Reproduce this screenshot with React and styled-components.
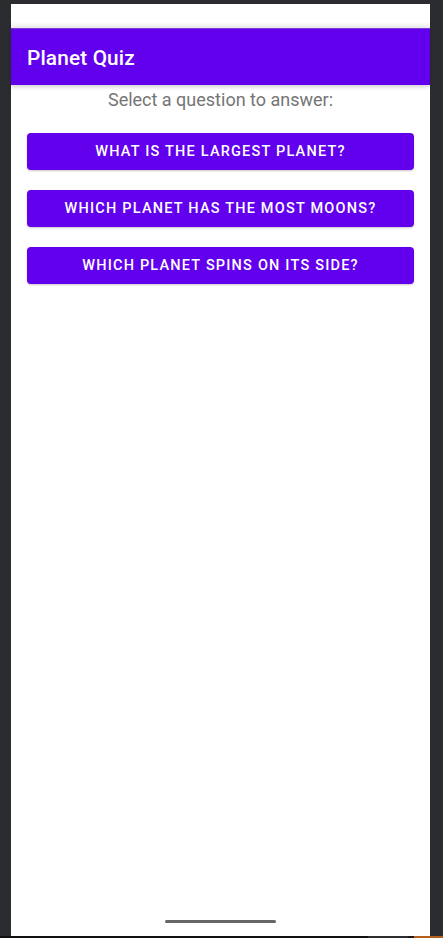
import React from "react";
import styled, { createGlobalStyle } from "styled-components";

const Global = createGlobalStyle`
  html, body { margin: 0; padding: 0; background: #2b2c30; }
  body { font-family: Roboto, "Noto Sans", Arial, sans-serif; }
  * { box-sizing: border-box; }
`;

const Frame = styled.div`
  width: 443px;
  height: 938px;
  display: flex;
  flex-direction: column;
  background: #2b2c30;
  overflow: hidden;
`;

const Device = styled.div`
  flex: 1;
  display: flex;
  padding: 4px 13px 0 11px;
`;

const Screen = styled.div`
  flex: 1;
  display: flex;
  flex-direction: column;
  background: #ffffff;
`;

const StatusBar = styled.div`
  height: 24px;
  background: linear-gradient(to bottom, #ffffff 0px, #ffffff 18px, #ececec 24px);
`;

const AppBar = styled.header`
  height: 57px;
  background: #6200ee;
  display: flex;
  align-items: center;
  padding-left: 16px;
  box-shadow: 0 2px 4px rgba(0, 0, 0, 0.18);
  border-top: 1px solid #7b3bd8;
`;

const Title = styled.h1`
  margin: 0;
  color: #ffffff;
  font-family: Roboto, sans-serif;
  font-weight: 500;
  font-size: 20.8px;
  letter-spacing: 0.15px;
  padding-top: 1px;
`;

const Content = styled.main`
  flex: 1;
  display: flex;
  flex-direction: column;
  padding: 0 16px;
`;

const Prompt = styled.p`
  margin: 3px 0 0;
  text-align: center;
  color: #757575;
  font-family: Roboto, sans-serif;
  font-size: 18px;
  line-height: 24px;
`;

const ButtonList = styled.div`
  display: flex;
  flex-direction: column;
  gap: 20px;
  margin-top: 21px;
`;

const QuizButton = styled.button`
  height: 37px;
  border: none;
  border-radius: 4px;
  background: #6200ee;
  color: #ffffff;
  font-family: Roboto, sans-serif;
  font-weight: 500;
  font-size: 14.5px;
  letter-spacing: 1.2px;
  text-transform: uppercase;
  box-shadow: 0 1px 2px rgba(0, 0, 0, 0.22);
  cursor: pointer;
  padding: 0 16px;
`;

const NavArea = styled.div`
  height: 23px;
  display: flex;
  justify-content: center;
  align-items: flex-start;
  padding-top: 7px;
`;

const HomeBar = styled.div`
  width: 111px;
  height: 3px;
  border-radius: 2px;
  background: #666666;
`;

const BottomStrip = styled.div`
  height: 2px;
  display: flex;
  background: #111111;
`;

const StripSegment = styled.div`
  width: ${(p) => p.$w}px;
  background: ${(p) => p.$c};
`;

const questions = [
  "What is the largest planet?",
  "Which planet has the most moons?",
  "Which planet spins on its side?",
];

export default function App() {
  return (
    <>
      <Global />
      <Frame>
        <Device>
          <Screen>
            <StatusBar />
            <AppBar>
              <Title>Planet Quiz</Title>
            </AppBar>
            <Content>
              <Prompt>Select a question to answer:</Prompt>
              <ButtonList>
                {questions.map((q) => (
                  <QuizButton key={q}>{q}</QuizButton>
                ))}
              </ButtonList>
            </Content>
            <NavArea>
              <HomeBar />
            </NavArea>
          </Screen>
        </Device>
        <BottomStrip>
          <StripSegment $w={368} $c="#111111" />
          <StripSegment $w={40} $c="#2e2e30" />
          <StripSegment $w={6} $c="#1a1a1a" />
          <StripSegment $w={29} $c="#b5601c" />
        </BottomStrip>
      </Frame>
    </>
  );
}
